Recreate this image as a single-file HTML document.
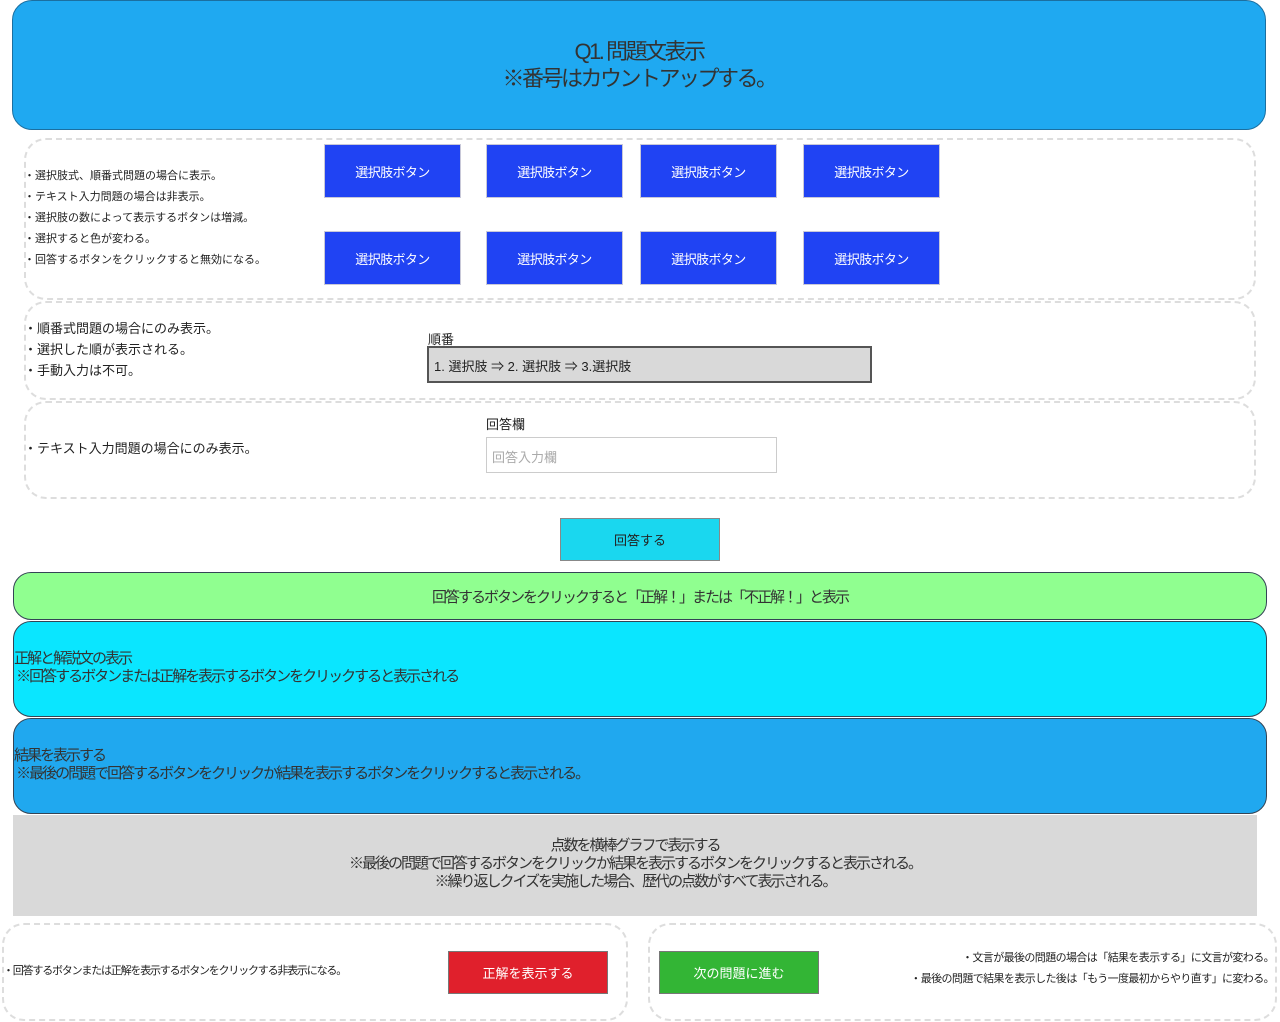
<!DOCTYPE html>
<html><head><meta charset="utf-8"><style>
body{margin:0;width:1280px;height:1022px;position:relative;background:#fff;font-family:"Liberation Sans","Noto Sans CJK JP",sans-serif;color:#222;overflow:hidden}
div{position:absolute;box-sizing:border-box}
.dash{border:2px dashed #ddd;border-radius:22px}
.cb{width:137px;height:54px;background:#2043f3;border:1px solid #c8c8d8;color:#fff;font-size:13px;letter-spacing:-0.6px;display:flex;align-items:center;justify-content:center}
.t{font-size:11px;line-height:21px;white-space:nowrap}
.bar{left:13px;width:1254px;border:1px solid #345;border-radius:18px;letter-spacing:-2px}
</style></head><body>
<div style="left:12px;top:0;width:1254px;height:130px;background:#1fa9f1;border:1px solid #1b6fa0;border-radius:20px;display:flex;align-items:center;justify-content:center;text-align:center;font-size:22px;line-height:27px;color:#333;letter-spacing:-2.5px">Q1. 問題文表示<br>※番号はカウントアップする。</div>

<div class="dash" style="left:24px;top:138px;width:1232px;height:162px"></div>
<div class="dash" style="left:24px;top:301px;width:1232px;height:99px"></div>
<div class="dash" style="left:24px;top:401px;width:1232px;height:98px"></div>

<div class="t" style="left:24px;top:166px">・選択肢式、順番式問題の場合に表示。<br>・テキスト入力問題の場合は非表示。<br>・選択肢の数によって表示するボタンは増減。<br>・選択すると色が変わる。<br>・回答するボタンをクリックすると無効になる。</div>
<div class="cb" style="left:324px;top:144px">選択肢ボタン</div>
<div class="cb" style="left:486px;top:144px">選択肢ボタン</div>
<div class="cb" style="left:640px;top:144px">選択肢ボタン</div>
<div class="cb" style="left:803px;top:144px">選択肢ボタン</div>
<div class="cb" style="left:324px;top:231px">選択肢ボタン</div>
<div class="cb" style="left:486px;top:231px">選択肢ボタン</div>
<div class="cb" style="left:640px;top:231px">選択肢ボタン</div>
<div class="cb" style="left:803px;top:231px">選択肢ボタン</div>

<div class="t" style="left:24px;top:318px;font-size:13px">・順番式問題の場合にのみ表示。<br>・選択した順が表示される。<br>・手動入力は不可。</div>
<div style="left:428px;top:329px;font-size:13px">順番</div>
<div style="left:427px;top:346px;width:445px;height:37px;background:#d9d9d9;border:2px solid #555;font-size:13px;padding:8px 5px">1. 選択肢 ⇒ 2. 選択肢 ⇒ 3.選択肢</div>

<div class="t" style="left:24px;top:438px;font-size:13px">・テキスト入力問題の場合にのみ表示。</div>
<div style="left:486px;top:414px;font-size:13px">回答欄</div>
<div style="left:486px;top:437px;width:291px;height:36px;border:1px solid #ccc;font-size:13px;color:#aaa;padding:9px 5px">回答入力欄</div>

<div style="left:560px;top:518px;width:160px;height:43px;background:#1ad7ef;border:1px solid #888;font-size:13px;display:flex;align-items:center;justify-content:center">回答する</div>

<div class="bar" style="top:572px;height:48px;background:#90ff90;display:flex;align-items:center;justify-content:center;font-size:15px;color:#333">回答するボタンをクリックすると「正解！」または「不正解！」と表示</div>
<div class="bar" style="top:621px;height:96px;background:#0ae6ff;font-size:15px;line-height:18px;padding-top:28px;color:#333">正解と解説文の表示<br>&nbsp;※回答するボタンまたは正解を表示するボタンをクリックすると表示される</div>
<div class="bar" style="top:718px;height:96px;background:#20a8ef;font-size:15px;line-height:18px;padding-top:28px;color:#333">結果を表示する<br>&nbsp;※最後の問題で回答するボタンをクリックか結果を表示するボタンをクリックすると表示される。</div>
<div style="left:13px;top:815px;width:1244px;height:101px;background:#d9d9d9;text-align:center;font-size:15px;line-height:18px;padding-top:22px;color:#333;letter-spacing:-2px">点数を横棒グラフで表示する<br>※最後の問題で回答するボタンをクリックか結果を表示するボタンをクリックすると表示される。<br>※繰り返しクイズを実施した場合、歴代の点数がすべて表示される。</div>

<div class="dash" style="left:2px;top:923px;width:626px;height:98px"></div>
<div class="dash" style="left:648px;top:923px;width:629px;height:98px"></div>
<div class="t" style="left:3px;top:961px;letter-spacing:-1.2px">・回答するボタンまたは正解を表示するボタンをクリックする非表示になる。</div>
<div style="left:448px;top:951px;width:160px;height:43px;background:#e0202c;border:1px solid #777;color:#fff;font-size:13px;display:flex;align-items:center;justify-content:center">正解を表示する</div>
<div style="left:659px;top:951px;width:160px;height:43px;background:#33b535;border:1px solid #777;color:#fff;font-size:13px;display:flex;align-items:center;justify-content:center">次の問題に進む</div>
<div class="t" style="right:6px;top:948px;text-align:right;letter-spacing:-0.6px">・文言が最後の問題の場合は「結果を表示する」に文言が変わる。<br>・最後の問題で結果を表示した後は「もう一度最初からやり直す」に変わる。</div>
</body></html>
